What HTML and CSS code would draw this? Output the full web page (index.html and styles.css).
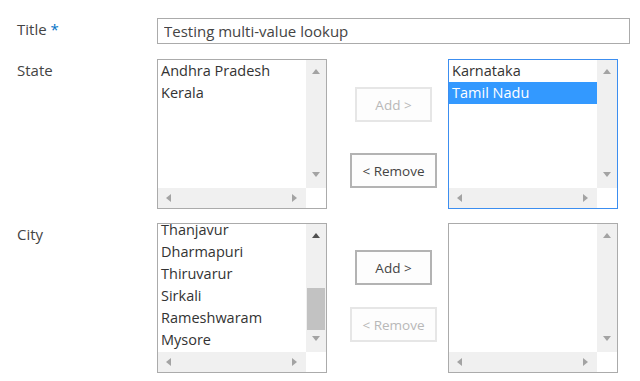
FILE: index.html
```html
<!DOCTYPE html>
<html lang="en">
<head>
    <meta charset="UTF-8">
    <title>Testing multi-value lookup</title>
    <link rel="stylesheet" href="styles.css">
</head>
<body>
    <div class="form">
        <!-- Title field -->
        <div class="row row-title">
            <div class="label">Title <span class="required">*</span></div>
            <input class="text-input" type="text" value="Testing multi-value lookup">
        </div>

        <!-- State lookup -->
        <div class="row row-picker">
            <div class="label">State</div>
            <div class="picker">
                <div class="listbox">
                    <div class="items">
                        <div class="item">Andhra Pradesh</div>
                        <div class="item">Kerala</div>
                    </div>
                    <div class="vbar">
                        <span class="arrow arrow-up"></span>
                        <span class="arrow arrow-down"></span>
                    </div>
                    <div class="hbar">
                        <span class="arrow arrow-left"></span>
                        <span class="arrow arrow-right"></span>
                    </div>
                    <div class="corner"></div>
                </div>
                <div class="mover mover-state">
                    <button class="btn btn-add" disabled>Add &gt;</button>
                    <button class="btn btn-remove">&lt; Remove</button>
                </div>
                <div class="listbox focused">
                    <div class="items">
                        <div class="item">Karnataka</div>
                        <div class="item selected">Tamil Nadu</div>
                    </div>
                    <div class="vbar">
                        <span class="arrow arrow-up"></span>
                        <span class="arrow arrow-down"></span>
                    </div>
                    <div class="hbar">
                        <span class="arrow arrow-left"></span>
                        <span class="arrow arrow-right"></span>
                    </div>
                    <div class="corner"></div>
                </div>
            </div>
        </div>

        <!-- City lookup -->
        <div class="row row-picker">
            <div class="label">City</div>
            <div class="picker">
                <div class="listbox">
                    <div class="items scrolled">
                        <div class="item">Thanjavur</div>
                        <div class="item">Dharmapuri</div>
                        <div class="item">Thiruvarur</div>
                        <div class="item">Sirkali</div>
                        <div class="item">Rameshwaram</div>
                        <div class="item">Mysore</div>
                    </div>
                    <div class="vbar">
                        <span class="arrow arrow-up active"></span>
                        <span class="thumb"></span>
                        <span class="arrow arrow-down"></span>
                    </div>
                    <div class="hbar">
                        <span class="arrow arrow-left"></span>
                        <span class="arrow arrow-right"></span>
                    </div>
                    <div class="corner"></div>
                </div>
                <div class="mover mover-city">
                    <button class="btn btn-add">Add &gt;</button>
                    <button class="btn btn-remove" disabled>&lt; Remove</button>
                </div>
                <div class="listbox">
                    <div class="items"></div>
                    <div class="vbar">
                        <span class="arrow arrow-up"></span>
                        <span class="arrow arrow-down"></span>
                    </div>
                    <div class="hbar">
                        <span class="arrow arrow-left"></span>
                        <span class="arrow arrow-right"></span>
                    </div>
                    <div class="corner"></div>
                </div>
            </div>
        </div>
    </div>
</body>
</html>
```

FILE: styles.css
```css
/* Page */
body {
    margin: 0;
    background: #ffffff;
    font-family: "Open Sans", "Noto Sans", Arial, sans-serif;
    color: #444444;
}

.form {
    display: flex;
    flex-direction: column;
    padding: 18px 10px 0 17px;
}

/* Label column + field column */
.row {
    display: grid;
    grid-template-columns: 140px 1fr;
}

.row-title {
    height: 26px;
    margin-bottom: 15px;
}

.row-picker {
    margin-bottom: 14px;
}

.label {
    font-size: 15px;
    line-height: 20px;
    color: #444444;
}

.row-title .label {
    margin-top: 1px;
}

.row-picker .label {
    margin-top: 1px;
}

.required {
    color: #0072c6;
}

/* Single line text input */
.text-input {
    width: 473px;
    height: 26px;
    box-sizing: border-box;
    margin: 0;
    padding: 0 6px;
    border: 1px solid #ababab;
    font-family: inherit;
    font-size: 15px;
    color: #444444;
    background: #ffffff;
}

/* Two list boxes with the add / remove buttons between */
.picker {
    display: flex;
    height: 150px;
}

.listbox {
    width: 170px;
    height: 150px;
    box-sizing: border-box;
    border: 1px solid #ababab;
    display: grid;
    grid-template-columns: 1fr 20px;
    grid-template-rows: 1fr 20px;
    background: #ffffff;
}

.listbox.focused {
    border-color: #3c8ef0;
}

.items {
    overflow: hidden;
    font-size: 14.5px;
    line-height: 22px;
    color: #333333;
}

.items.scrolled .item:first-child {
    margin-top: -5px;
}

.item {
    padding-left: 3px;
    white-space: nowrap;
}

.item.selected {
    background: #3399ff;
    color: #ffffff;
}

/* Fake scrollbars */
.vbar {
    position: relative;
    display: flex;
    flex-direction: column;
    justify-content: space-between;
    align-items: center;
    padding: 9px 0 11px;
    background: #f0f0f0;
}

.hbar {
    display: flex;
    justify-content: space-between;
    align-items: center;
    padding: 0 9px 0 8px;
    background: #f0f0f0;
}

.corner {
    background: #ffffff;
}

.arrow {
    width: 0;
    height: 0;
    border-style: solid;
    border-color: transparent;
}

.arrow-up {
    border-width: 0 4px 5px 4px;
    border-bottom-color: #a3a3a3;
}

.arrow-up.active {
    border-bottom-color: #505050;
}

.arrow-down {
    border-width: 5px 4px 0 4px;
    border-top-color: #a3a3a3;
}

.arrow-left {
    border-width: 4px 5px 4px 0;
    border-right-color: #a3a3a3;
}

.arrow-right {
    border-width: 4px 0 4px 5px;
    border-left-color: #a3a3a3;
}

.thumb {
    position: absolute;
    left: 1px;
    right: 1px;
    top: 64px;
    height: 42px;
    background: #c2c2c2;
}

/* Buttons column */
.mover {
    width: 121px;
    display: flex;
    flex-direction: column;
    align-items: center;
    padding-left: 12px;
    box-sizing: border-box;
}

.mover-state {
    padding-top: 28px;
    gap: 31px;
}

.mover-city {
    padding-top: 27px;
    gap: 22px;
}

.btn {
    height: 35px;
    box-sizing: border-box;
    margin: 0;
    border: 2px solid #b3b3b3;
    background: #fdfdfd;
    font-family: inherit;
    font-size: 13.5px;
    color: #444444;
}

.btn-add {
    width: 77px;
}

.btn-remove {
    width: 87px;
}

.btn:disabled {
    border-color: #e6e6e6;
    color: #b8b8b8;
    background: #fdfdfd;
}
```
